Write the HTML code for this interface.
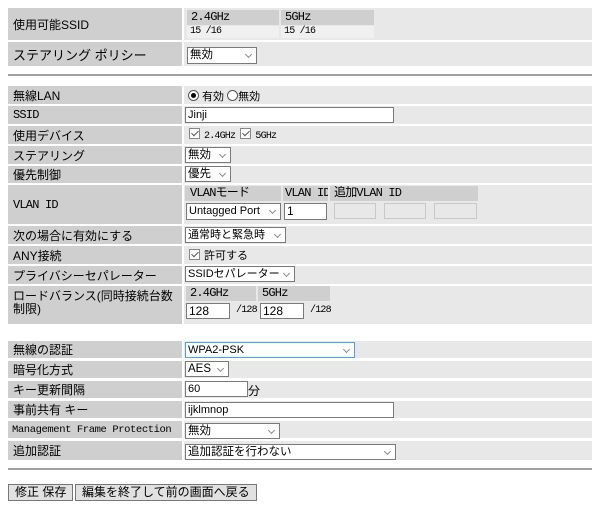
<!DOCTYPE html>
<html><head><meta charset="utf-8"><style>
*{box-sizing:border-box;margin:0;padding:0}
body{width:600px;height:508px;background:#fff;font-family:"Liberation Sans","Noto Sans CJK JP",sans-serif;font-size:12px;color:#000;position:relative;overflow:hidden}
.a{position:absolute}
.l{position:absolute;left:8px;width:174px;background:#cfcfcf;padding-left:5px;display:flex;align-items:center;white-space:nowrap}
.v{position:absolute;left:184px;width:408px;background:#e8e8e8}
.h{position:absolute;background:#cfcfcf;padding-left:4px;line-height:15px;font-family:"Liberation Mono","Noto Sans CJK JP",monospace;font-size:12px;letter-spacing:-0.8px;white-space:nowrap;overflow:hidden}
.sel{position:absolute;background:#fff;border:1px solid #7a7a7a;height:17px;line-height:15px;padding-left:2px;white-space:nowrap;font-size:11.5px;overflow:hidden}
.sel:after{content:"";position:absolute;right:5px;top:4px;width:4px;height:4px;border-right:1px solid #888;border-bottom:1px solid #888;transform:rotate(45deg)}
.inp{position:absolute;background:#fff;border:1px solid #7a7a7a;height:17px;line-height:15px;padding-left:2px;font-size:12px}
.dis{position:absolute;background:#e8e8e8;border:1px solid #c8c8c8;height:16px}
.cb{display:inline-block;width:11px;height:11px;border:1px solid #888;background:#fff;vertical-align:-1px;margin-right:4px;position:relative}
.cb:after{content:"";position:absolute;left:3px;top:0px;width:3px;height:6px;border-right:1px solid #555;border-bottom:1px solid #555;transform:rotate(45deg)}
.hr{position:absolute;left:8px;width:584px;height:2px;background:#a0a0a0}
.btn{position:absolute;top:484px;height:17px;border:1px solid #777;background:#e1e1e1;line-height:15px;padding:0 6px;font-size:12px}
.m{font-family:"Liberation Mono","Noto Sans CJK JP",monospace;font-size:12px;letter-spacing:-0.8px}
</style></head><body>
<div class="l" style="top:8px;height:32px">使用可能SSID</div>
<div class="v" style="top:8px;height:32px"></div>
<div class="h" style="left:187px;top:10px;width:92px">2.4GHz</div>
<div class="h" style="left:281px;top:10px;width:93px">5GHz</div>
<div class="a m" style="left:187px;top:26px;width:92px;height:12px;background:#f0f0f0;font-size:10px;line-height:12px;padding-left:3px">15 /16</div>
<div class="a m" style="left:281px;top:26px;width:93px;height:12px;background:#f0f0f0;font-size:10px;line-height:12px;padding-left:3px">15 /16</div>
<div class="l" style="top:42px;height:24px;font-size:13px">ステアリング ポリシー</div>
<div class="v" style="top:42px;height:24px"></div>
<div class="sel" style="left:187px;top:47px;width:70px">無効</div>
<div class="hr" style="top:74px"></div>

<div class="l" style="top:86px;height:18px">無線LAN</div><div class="v" style="top:86px;height:18px"></div>
<div class="a" style="left:188px;top:88px;font-size:11px"><span style="display:inline-block;width:11px;height:11px;border:1px solid #555;border-radius:50%;background:#fff;vertical-align:-1px;position:relative"><span style="position:absolute;left:2px;top:2px;width:5px;height:5px;border-radius:50%;background:#000"></span></span> 有効 <span style="display:inline-block;width:11px;height:11px;border:1px solid #555;border-radius:50%;background:#fff;vertical-align:-1px"></span>無効</div>
<div class="l m" style="top:106px;height:18px">SSID</div><div class="v" style="top:106px;height:18px"></div>
<div class="inp" style="left:185px;top:107px;width:209px;height:16px;font-size:11px">Jinji</div>
<div class="l" style="top:126px;height:18px">使用デバイス</div><div class="v" style="top:126px;height:18px"></div>
<div class="a m" style="left:189px;top:128px;font-size:10px"><span class="cb"></span>2.4GHz <span class="cb"></span>5GHz</div>
<div class="l" style="top:146px;height:18px">ステアリング</div><div class="v" style="top:146px;height:18px"></div>
<div class="sel" style="left:185px;top:147px;width:46px;height:16px">無効</div>
<div class="l" style="top:166px;height:17px">優先制御</div><div class="v" style="top:166px;height:17px"></div>
<div class="sel" style="left:185px;top:166px;width:46px;height:16px">優先</div>
<div class="l m" style="top:185px;height:39px">VLAN ID</div><div class="v" style="top:185px;height:39px"></div>
<div class="h" style="left:185px;top:186px;width:96px;padding-left:5px">VLANモード</div>
<div class="h" style="left:283px;top:186px;width:45px;padding-left:2px">VLAN ID</div>
<div class="h" style="left:330px;top:186px;width:148px">追加VLAN ID</div>
<div class="sel" style="left:186px;top:203px;width:95px;font-size:11px">Untagged Port</div>
<div class="inp" style="left:284px;top:203px;width:43px">1</div>
<div class="dis" style="left:334px;top:203px;width:42px"></div>
<div class="dis" style="left:384px;top:203px;width:42px"></div>
<div class="dis" style="left:434px;top:203px;width:43px"></div>
<div class="l" style="top:226px;height:18px">次の場合に有効にする</div><div class="v" style="top:226px;height:18px"></div>
<div class="sel" style="left:185px;top:227px;width:101px;height:16px;font-size:11px">通常時と緊急時</div>
<div class="l" style="top:246px;height:18px">ANY接続</div><div class="v" style="top:246px;height:18px"></div>
<div class="a" style="left:189px;top:247px;font-size:11px"><span class="cb"></span>許可する</div>
<div class="l" style="top:266px;height:18px">プライバシーセパレーター</div><div class="v" style="top:266px;height:18px"></div>
<div class="sel" style="left:185px;top:266px;width:110px;height:16px;font-size:11px">SSIDセパレーター</div>
<div class="l" style="top:286px;height:38px;line-height:13px;white-space:normal;align-items:flex-start;padding-top:4px">ロードバランス(同時接続台数制限)</div><div class="v" style="top:286px;height:38px"></div>
<div class="h" style="left:186px;top:286px;width:70px">2.4GHz</div>
<div class="h" style="left:258px;top:286px;width:72px">5GHz</div>
<div class="inp" style="left:186px;top:303px;width:44px;height:16px">128</div>
<div class="a m" style="left:236px;top:305px;font-size:10px">/128</div>
<div class="inp" style="left:260px;top:303px;width:44px;height:16px">128</div>
<div class="a m" style="left:310px;top:305px;font-size:10px">/128</div>

<div class="l" style="top:341px;height:17px">無線の認証</div><div class="v" style="top:341px;height:17px"></div>
<div class="sel" style="left:185px;top:342px;width:170px;height:16px;border-color:#4aa3df;font-size:11px">WPA2-PSK</div>
<div class="l" style="top:361px;height:17px">暗号化方式</div><div class="v" style="top:361px;height:17px"></div>
<div class="sel" style="left:185px;top:361px;width:44px;height:16px">AES</div>
<div class="l" style="top:381px;height:17px">キー更新間隔</div><div class="v" style="top:381px;height:17px"></div>
<div class="inp" style="left:185px;top:381px;width:63px;height:16px;font-size:11px">60</div>
<div class="a" style="left:248px;top:382px">分</div>
<div class="l" style="top:401px;height:17px">事前共有 キー</div><div class="v" style="top:401px;height:17px"></div>
<div class="inp" style="left:185px;top:402px;width:209px;height:16px;font-size:11px">ijklmnop</div>
<div class="l m" style="top:421px;height:17px;font-size:10.5px;padding-left:4px;letter-spacing:-0.4px">Management Frame Protection</div><div class="v" style="top:421px;height:17px"></div>
<div class="sel" style="left:185px;top:423px;width:95px;height:16px">無効</div>
<div class="l" style="top:441px;height:19px">追加認証</div><div class="v" style="top:441px;height:19px"></div>
<div class="sel" style="left:185px;top:444px;width:211px;height:16px">追加認証を行わない</div>
<div class="hr" style="top:468px"></div>
<div class="btn" style="left:8px">修正 保存</div>
<div class="btn" style="left:75px">編集を終了して前の画面へ戻る</div>
</body></html>
